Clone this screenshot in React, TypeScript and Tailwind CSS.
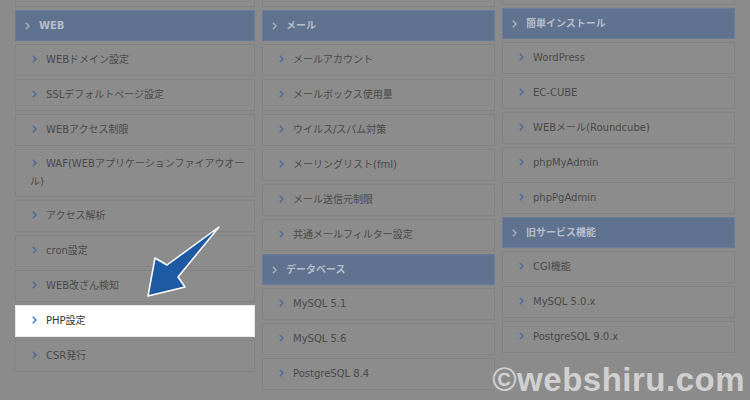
import React from "react";

const FONT = { fontFamily: '"DejaVu Sans", "Noto Sans CJK JP", sans-serif' };

function Chev({ className }: { className: string }) {
  return (
    <svg width="5" height="8" viewBox="0 0 5 8" className={className}>
      <path d="M0.8 0.8 L4 4 L0.8 7.2" fill="none" stroke="currentColor" strokeWidth="1.5" />
    </svg>
  );
}

function Header({ label }: { label: string }) {
  return (
    <div className="h-[31px] bg-[#5f7290] border border-[#6a7b97] flex items-center pl-[9px] text-[10px] font-bold text-[#b6bdcb]">
      <Chev className="text-[#a9aeb8] mr-[9px] shrink-0" />
      <span>{label}</span>
    </div>
  );
}

function Item({ label, active }: { label: string; active?: boolean }) {
  return (
    <div
      className={
        "min-h-[32px] flex items-center border py-[5px] pl-[14px] pr-[6px] text-[10px] leading-[18px] " +
        (active
          ? "bg-white border-[#e8e8e8] text-[#333333]"
          : "bg-[#8c8c8c] border-[#838383] text-[#4a4a4a]")
      }
    >
      <span>
        <Chev
          className={
            "inline-block align-[0px] ml-[2px] mr-[9px] " +
            (active ? "text-[#3a7bd5]" : "text-[#4f6c98]")
          }
        />
        {label}
      </span>
    </div>
  );
}

export default function App() {
  return (
    <div
      className="relative w-[750px] h-[400px] overflow-hidden bg-[#8b8b8b]"
      style={FONT}
    >
      <div className="flex pl-[15px] gap-[7px]">
        <div className="w-[240px] flex flex-col gap-[3px] -mt-[25px]">
          <Item label="" />
          <Header label="WEB" />
          <Item label="WEBドメイン設定" />
          <Item label="SSLデフォルトページ設定" />
          <Item label="WEBアクセス制限" />
          <Item label="WAF(WEBアプリケーションファイアウオール)" />
          <Item label="アクセス解析" />
          <Item label="cron設定" />
          <Item label="WEB改ざん検知" />
          <Item label="PHP設定" active />
          <Item label="CSR発行" />
        </div>
        <div className="w-[233px] flex flex-col gap-[3px] -mt-[25px]">
          <Item label="" />
          <Header label="メール" />
          <Item label="メールアカウント" />
          <Item label="メールボックス使用量" />
          <Item label="ウイルス/スパム対策" />
          <Item label="メーリングリスト(fml)" />
          <Item label="メール送信元制限" />
          <Item label="共通メールフィルター設定" />
          <Header label="データベース" />
          <Item label="MySQL 5.1" />
          <Item label="MySQL 5.6" />
          <Item label="PostgreSQL 8.4" />
        </div>
        <div className="w-[233px] flex flex-col gap-[3px] -mt-[27px]">
          <Item label="" />
          <Header label="簡単インストール" />
          <Item label="WordPress" />
          <Item label="EC-CUBE" />
          <Item label="WEBメール(Roundcube)" />
          <Item label="phpMyAdmin" />
          <Item label="phpPgAdmin" />
          <Header label="旧サービス機能" />
          <Item label="CGI機能" />
          <Item label="MySQL 5.0.x" />
          <Item label="PostgreSQL 9.0.x" />
        </div>
      </div>

      <svg className="absolute left-0 top-0" width="750" height="400">
        <polygon
          points="219,227 178,277 185,287 148,296 155,258 167,265"
          fill="#1d5aa3"
          stroke="#ffffff"
          strokeWidth="1.5"
          strokeLinejoin="round"
        />
      </svg>

      <div
        className="absolute right-[5px] bottom-[0px] text-[33px] font-bold leading-none text-[#d0d0d0] pb-[4px]"
        style={{ fontFamily: '"Liberation Sans", Arial, sans-serif', letterSpacing: "0.5px" }}
      >
        ©webshiru.com
      </div>
    </div>
  );
}
